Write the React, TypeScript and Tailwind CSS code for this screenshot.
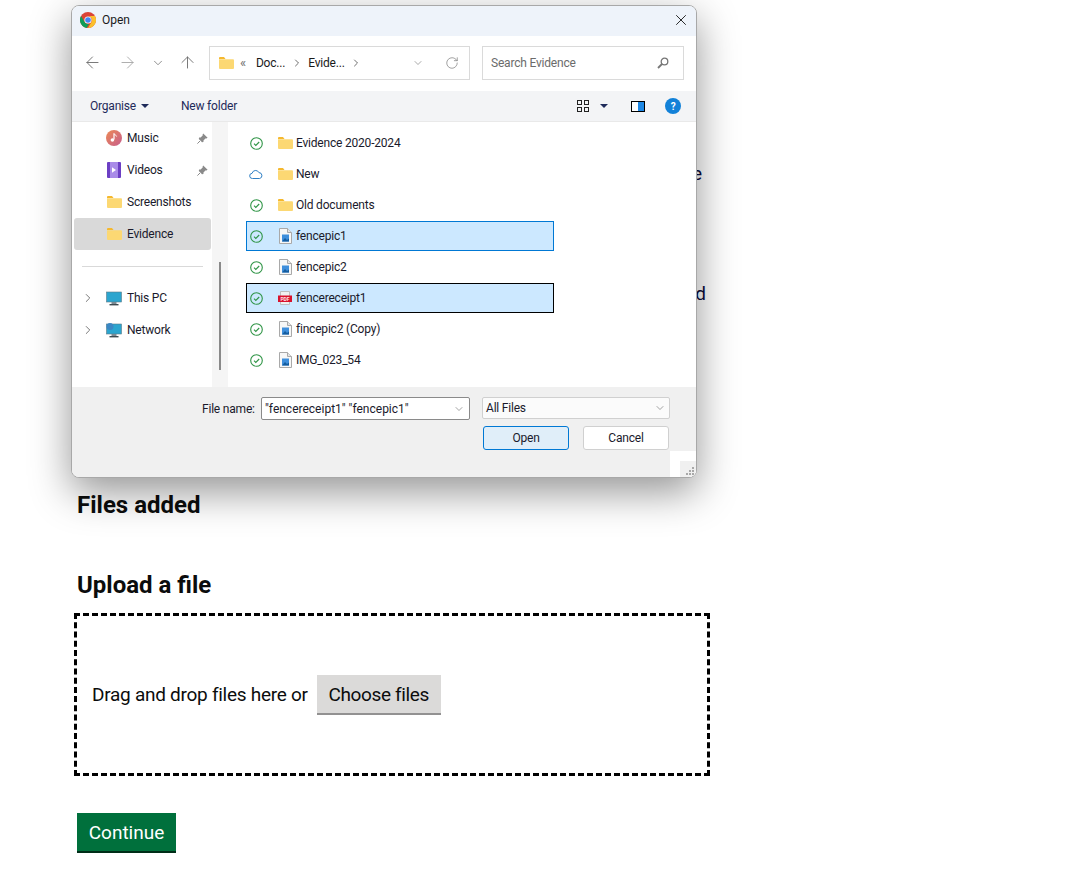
/**
 * Upload page with the native Open dialog on top of it
 */

import { ArrowLeft, ArrowRight, ArrowUp, ChevronDown, ChevronRight, RotateCw, X } from 'lucide-react';

function ChromeIcon() {
  return (
    <svg width="16" height="16" viewBox="0 0 16 16">
      <circle cx="8" cy="8" r="8" fill="#db4437" />
      <path d="M8 16A8 8 0 0 1 1.07 4L4.6 10a4 4 0 0 0 4.4 1.9L6.6 15.9A8 8 0 0 0 8 16z" fill="#0f9d58" />
      <path d="M8 16a8 8 0 0 0 6.93-12H8a4 4 0 0 1 3.46 6z" fill="#fbc02d" />
      <circle cx="8" cy="8" r="3.6" fill="#fff" />
      <circle cx="8" cy="8" r="2.8" fill="#4285f4" />
    </svg>
  );
}

function Folder() {
  return (
    <svg width="15" height="12" viewBox="0 0 15 12" className="shrink-0">
      <path d="M0 1a1 1 0 0 1 1-1h4l1.5 2H0z" fill="#f5b82e" />
      <path d="M0 2.2h14a1 1 0 0 1 1 1V11a1 1 0 0 1-1 1H1a1 1 0 0 1-1-1z" fill="#fcd873" />
    </svg>
  );
}

function ImageFile() {
  return (
    <svg width="13" height="16" viewBox="0 0 13 16" className="shrink-0">
      <path d="M.5.5h8l4 4v11H.5z" fill="#f7f7f7" stroke="#a9a9a9" />
      <path d="M8.5.5v4h4" fill="#e4e4e4" stroke="#a9a9a9" />
      <rect x="3" y="6.5" width="7" height="7" fill="#3f8fdc" />
      <path d="M3 13.5l3-3.5 2 2 2-1.5v3z" fill="#145da0" />
    </svg>
  );
}

function PdfFile() {
  return (
    <svg width="14" height="14" viewBox="0 0 14 14" className="shrink-0">
      <path d="M2.5.5h9v13h-9z" fill="#f0f0f0" stroke="#bdbdbd" />
      <rect x="0" y="4.5" width="14" height="6.5" fill="#d9122c" />
      <text x="7" y="9.6" textAnchor="middle" fontSize="5" fontWeight="700" fill="#ffe3e6">PDF</text>
    </svg>
  );
}

function SyncedIcon() {
  return (
    <svg width="13" height="13" viewBox="0 0 13 13" fill="none">
      <circle cx="6.5" cy="6.5" r="5.8" stroke="#2e9445" strokeWidth="1.1" />
      <path d="M4 6.7l1.8 1.8L9.2 5" stroke="#2e9445" strokeWidth="1.1" />
    </svg>
  );
}

function CloudIcon() {
  return (
    <svg width="14" height="11" viewBox="0 0 14 11" fill="none">
      <path
        d="M3.5 9.5a2.6 2.6 0 0 1-.4-5.2A3.6 3.6 0 0 1 9.9 3.6a3 3 0 0 1 .8 5.9z"
        stroke="#2f7fc4"
      />
    </svg>
  );
}

function PinIcon() {
  return (
    <svg width="11" height="11" viewBox="0 0 11 11" className="ml-auto mr-[3px]">
      <path d="M6.2.4l4.4 4.4-1 .6-.8-.2L6.6 7.3 6.4 9 5 9.2 1.8 6l.3-1.4 1.6-.2L5.8 2.2 5.6 1.4z" fill="#8a8a8a" />
      <path d="M3 8l-2.6 2.6" stroke="#8a8a8a" />
    </svg>
  );
}

function MusicIcon() {
  return (
    <svg width="16" height="16" viewBox="0 0 16 16" className="shrink-0">
      <defs>
        <linearGradient id="music" x1="0" y1="0" x2="1" y2="1">
          <stop offset="0" stopColor="#ec8a55" />
          <stop offset="1" stopColor="#c75d8c" />
        </linearGradient>
      </defs>
      <circle cx="8" cy="8" r="8" fill="url(#music)" />
      <path d="M8 3.5v6" stroke="#fff" strokeWidth="1.2" />
      <path d="M8 3.5c.4 1.6 2.4 1.4 2.6 3" stroke="#fff" fill="none" />
      <circle cx="6.4" cy="10" r="1.8" fill="#fff" />
    </svg>
  );
}

function VideoIcon() {
  return (
    <svg width="14" height="16" viewBox="0 0 14 16" className="shrink-0">
      <rect width="14" height="16" rx="1" fill="#6c3fc4" />
      <rect x="3" y="0" width="8" height="16" fill="#a98be8" />
      <path d="M5 5.2l4 2.8-4 2.8z" fill="#fff" />
    </svg>
  );
}

function MonitorIcon({ network }: { network?: boolean }) {
  return (
    <svg width="16" height="15" viewBox="0 0 16 15" className="shrink-0">
      <rect x="0.5" y="1" width="15" height="10" fill="#2ba5cf" stroke="#5d7a88" strokeWidth="0.6" />
      <rect x="5.5" y="11" width="5" height="2" fill="#7b8a93" />
      <rect x="3.5" y="13" width="9" height="1.4" fill="#3e4a50" />
      {network && <circle cx="4" cy="3.5" r="3.5" fill="#3b87c4" />}
    </svg>
  );
}

function NavRow({ icon, label, pinned, selected, expandable }: {
  icon: React.ReactNode;
  label: string;
  pinned?: boolean;
  selected?: boolean;
  expandable?: boolean;
}) {
  return (
    <div className={`ml-[2px] flex h-[32px] w-[137px] items-center rounded-[3px] ${selected ? 'bg-[#d9d9d9]' : ''}`}>
      <div className="flex w-[21px] shrink-0 justify-end">
        {expandable && <ChevronRight size={14} strokeWidth={1.6} className="text-[#6f6f6f]" />}
      </div>
      <div className="ml-[11px] flex w-[16px] shrink-0 justify-center">{icon}</div>
      <span className="ml-[5px] text-[12px] tracking-[-0.2px] text-[#1a1a2c]">{label}</span>
      {pinned && <PinIcon />}
    </div>
  );
}

const files = [
  { name: 'Evidence 2020-2024', type: 'folder' },
  { name: 'New', type: 'folder', cloud: true },
  { name: 'Old documents', type: 'folder' },
  { name: 'fencepic1', type: 'image', selected: 'blue' },
  { name: 'fencepic2', type: 'image' },
  { name: 'fencereceipt1', type: 'pdf', selected: 'black' },
  { name: 'fincepic2 (Copy)', type: 'image' },
  { name: 'IMG_023_54', type: 'image' },
];

function FileRow({ file }: { file: (typeof files)[number] }) {
  let box = 'border border-transparent';
  if (file.selected === 'blue') box = 'border border-[#0078d4] bg-[#cce8ff]';
  if (file.selected === 'black') box = 'border border-black bg-[#cce8ff]';
  return (
    <div className="h-[31px]">
      <div className={`ml-[18px] flex h-[30px] w-[308px] items-center ${box}`}>
        <div className="ml-[1px] flex w-[16px] justify-center">
          {file.cloud ? <CloudIcon /> : <SyncedIcon />}
        </div>
        <div className="ml-[13px] flex w-[16px] justify-center">
          {file.type === 'folder' && <Folder />}
          {file.type === 'image' && <ImageFile />}
          {file.type === 'pdf' && <PdfFile />}
        </div>
        <span className="ml-[3px] text-[12px] tracking-[-0.2px] text-[#1a1a2c]">{file.name}</span>
      </div>
    </div>
  );
}

function OpenDialog() {
  return (
    <div className="absolute left-[71px] top-[5px] flex h-[473px] w-[626px] flex-col overflow-hidden rounded-[8px] border border-[#a8a8a8] bg-white font-['Roboto',sans-serif] shadow-[0_14px_40px_rgba(0,0,0,0.42)]">
      {/* title bar */}
      <div className="flex h-[30px] shrink-0 items-center bg-[#eef3fa] pb-[2px] pl-[8px] pr-[6px]">
        <ChromeIcon />
        <span className="ml-[6px] text-[12px] text-[#1a1a1a]">Open</span>
        <X size={18} strokeWidth={1.1} className="ml-auto text-black" />
      </div>

      {/* nav bar */}
      <div className="flex h-[55px] shrink-0 items-center pb-[2px]">
        <ArrowLeft size={19} strokeWidth={1.1} className="ml-[11px] text-[#666666]" />
        <ArrowRight size={19} strokeWidth={1.1} className="ml-[16px] text-[#a3a3a3]" />
        <ChevronDown size={14} strokeWidth={1.3} className="ml-[14px] text-[#6f6f6f]" />
        <ArrowUp size={19} strokeWidth={1.1} className="ml-[13px] text-[#666666]" />
        <div className="ml-[12px] flex h-[34px] w-[261px] items-center border border-[#dadada] pl-[9px] text-[12px] tracking-[-0.2px] text-[#1a1a1a]">
          <Folder />
          <span className="ml-[6px] text-[13px] text-[#6f6f6f]">«</span>
          <span className="ml-[10px]">Doc...</span>
          <ChevronRight size={12} strokeWidth={1.7} className="ml-[6px] text-[#555]" />
          <span className="ml-[5px]">Evide...</span>
          <ChevronRight size={12} strokeWidth={1.7} className="ml-[5px] text-[#555]" />
          <ChevronDown size={12} strokeWidth={1.2} className="ml-[50px] text-[#6f6f6f]" />
          <RotateCw size={14} strokeWidth={1.2} className="ml-[21px] text-[#7b7b7b]" />
        </div>
        <div className="ml-[12px] flex h-[34px] w-[202px] items-center border border-[#dadada] pl-[8px] pr-[14px] text-[12px] tracking-[-0.2px] text-[#6b6b6b]">
          Search Evidence
          <svg width="12" height="12" viewBox="0 0 12 12" fill="none" className="ml-auto">
            <circle cx="7.5" cy="4.5" r="3.3" stroke="#777" strokeWidth="1.3" />
            <path d="M5 7L1 11" stroke="#777" strokeWidth="1.8" />
          </svg>
        </div>
      </div>

      {/* command bar */}
      <div className="flex h-[31px] shrink-0 items-center border-b border-[#e9e9e9] bg-[#f3f4f6] text-[12px] tracking-[-0.2px] text-[#1e2a5a]">
        <span className="ml-[18px]">Organise</span>
        <svg width="8" height="4" viewBox="0 0 8 4" className="ml-[5px]"><path d="M0 0h8L4 4z" fill="#1e2a5a" /></svg>
        <span className="ml-[32px]">New folder</span>
        <svg width="12" height="12" viewBox="0 0 12 12" fill="none" stroke="#222" className="ml-[340px]">
          <rect x="0.5" y="0.5" width="4" height="4" />
          <rect x="7.5" y="0.5" width="4" height="4" />
          <rect x="0.5" y="7.5" width="4" height="4" />
          <rect x="7.5" y="7.5" width="4" height="4" />
        </svg>
        <svg width="8" height="4" viewBox="0 0 8 4" className="ml-[11px]"><path d="M0 0h8L4 4z" fill="#1e2a5a" /></svg>
        <div className="ml-[23px] flex h-[11px] w-[14px] border border-black bg-white">
          <div className="ml-auto w-[6px] bg-[#1e88e5]" />
        </div>
        <div className="ml-[20px] flex h-[16px] w-[16px] items-center justify-center rounded-full bg-[#1281d8] text-[10px] font-bold text-white">?</div>
      </div>

      {/* panes */}
      <div className="flex min-h-0 flex-1">
        <div className="w-[140px] shrink-0">
          <NavRow icon={<MusicIcon />} label="Music" pinned />
          <NavRow icon={<VideoIcon />} label="Videos" pinned />
          <NavRow icon={<Folder />} label="Screenshots" />
          <NavRow icon={<Folder />} label="Evidence" selected />
          <div className="flex h-[32px] items-center">
            <div className="ml-[10px] h-px w-[121px] bg-[#d9d9d9]" />
          </div>
          <NavRow icon={<MonitorIcon />} label="This PC" expandable />
          <NavRow icon={<MonitorIcon network />} label="Network" expandable />
        </div>
        <div className="flex w-[16px] shrink-0 justify-center bg-[#f5f5f5] pt-[140px]">
          <div className="h-[108px] w-[2px] bg-[#8a8a8a]" />
        </div>
        <div className="flex-1 pt-[6px]">
          {files.map((file) => (
            <FileRow key={file.name} file={file} />
          ))}
        </div>
      </div>

      {/* file name + buttons */}
      <div className="relative flex h-[90px] shrink-0 flex-col bg-[#f0f0f0] pt-[10px] text-[12px] tracking-[-0.2px] text-[#1a1a2c]">
        <div className="flex items-start">
          <span className="ml-[130px] mt-[3px] w-[54px] whitespace-nowrap">File name:</span>
          <div className="ml-[5px] flex h-[23px] w-[209px] items-center rounded-[2px] border border-[#8a8a8a] bg-white pl-[3px] tracking-normal">
            "fencereceipt1" "fencepic1"
            <ChevronDown size={12} strokeWidth={1.2} className="ml-auto mr-[4px] text-[#666]" />
          </div>
          <div className="ml-[12px] flex h-[22px] w-[188px] items-center rounded-[2px] border border-[#d0d0d0] bg-[#fbfbfb] pl-[3px]">
            All Files
            <ChevronDown size={12} strokeWidth={1.2} className="ml-auto mr-[3px] text-[#666]" />
          </div>
        </div>
        <div className="mt-[6px] flex">
          <div className="ml-[411px] flex h-[24px] w-[86px] items-center justify-center rounded-[3px] border border-[#0078d4] bg-[#e0eef9]">Open</div>
          <div className="ml-[14px] flex h-[24px] w-[86px] items-center justify-center rounded-[3px] border border-[#d0d0d0] bg-white">Cancel</div>
        </div>
        <div className="absolute bottom-0 right-0 flex h-[26px] w-[26px] items-end justify-end bg-white">
          <div className="flex h-[16px] w-[16px] items-end justify-end bg-[#f0f0f0] p-[2px]">
            <svg width="8" height="8" viewBox="0 0 8 8" fill="#a8a8a8">
              <rect x="6" y="0" width="2" height="2" />
              <rect x="3" y="3" width="2" height="2" />
              <rect x="6" y="3" width="2" height="2" />
              <rect x="0" y="6" width="2" height="2" />
              <rect x="3" y="6" width="2" height="2" />
              <rect x="6" y="6" width="2" height="2" />
            </svg>
          </div>
        </div>
      </div>
    </div>
  );
}

export default function App() {
  return (
    <div className="relative h-[878px] w-[1088px] overflow-hidden bg-white font-['Roboto',sans-serif] text-[#0b0c0c]">
      <main className="flex flex-col pl-[77px] pt-[161px]">
        <p className="h-[25px] w-[625px] text-right text-[19px] leading-[25px] text-[#0b0c3c]">e</p>
        <p className="mt-[95px] h-[25px] w-[629px] text-right text-[19px] leading-[25px] text-[#0b0c3c]">d</p>
        <h2 className="mt-[184px] text-[24px] font-bold leading-[30px]">Files added</h2>
        <h2 className="mt-[50px] text-[24px] font-bold leading-[30px]">Upload a file</h2>
        <div className="-ml-[3px] mt-[13px] flex h-[163px] w-[636px] items-center border-[3px] border-dashed border-black pl-[15px] pt-[1px]">
          <span className="text-[19px] tracking-[-0.27px]">Drag and drop files here or</span>
          <button className="ml-[9px] h-[40px] w-[124px] border-b-2 border-[#929191] bg-[#dbdad9] pt-[2px] text-[19px] tracking-[-0.35px]">Choose files</button>
        </div>
        <button className="mt-[37px] h-[40px] w-[99px] border-b-2 border-[#002d18] bg-[#00703c] pt-[2px] text-[19px] text-white">Continue</button>
      </main>
      <OpenDialog />
    </div>
  );
}
